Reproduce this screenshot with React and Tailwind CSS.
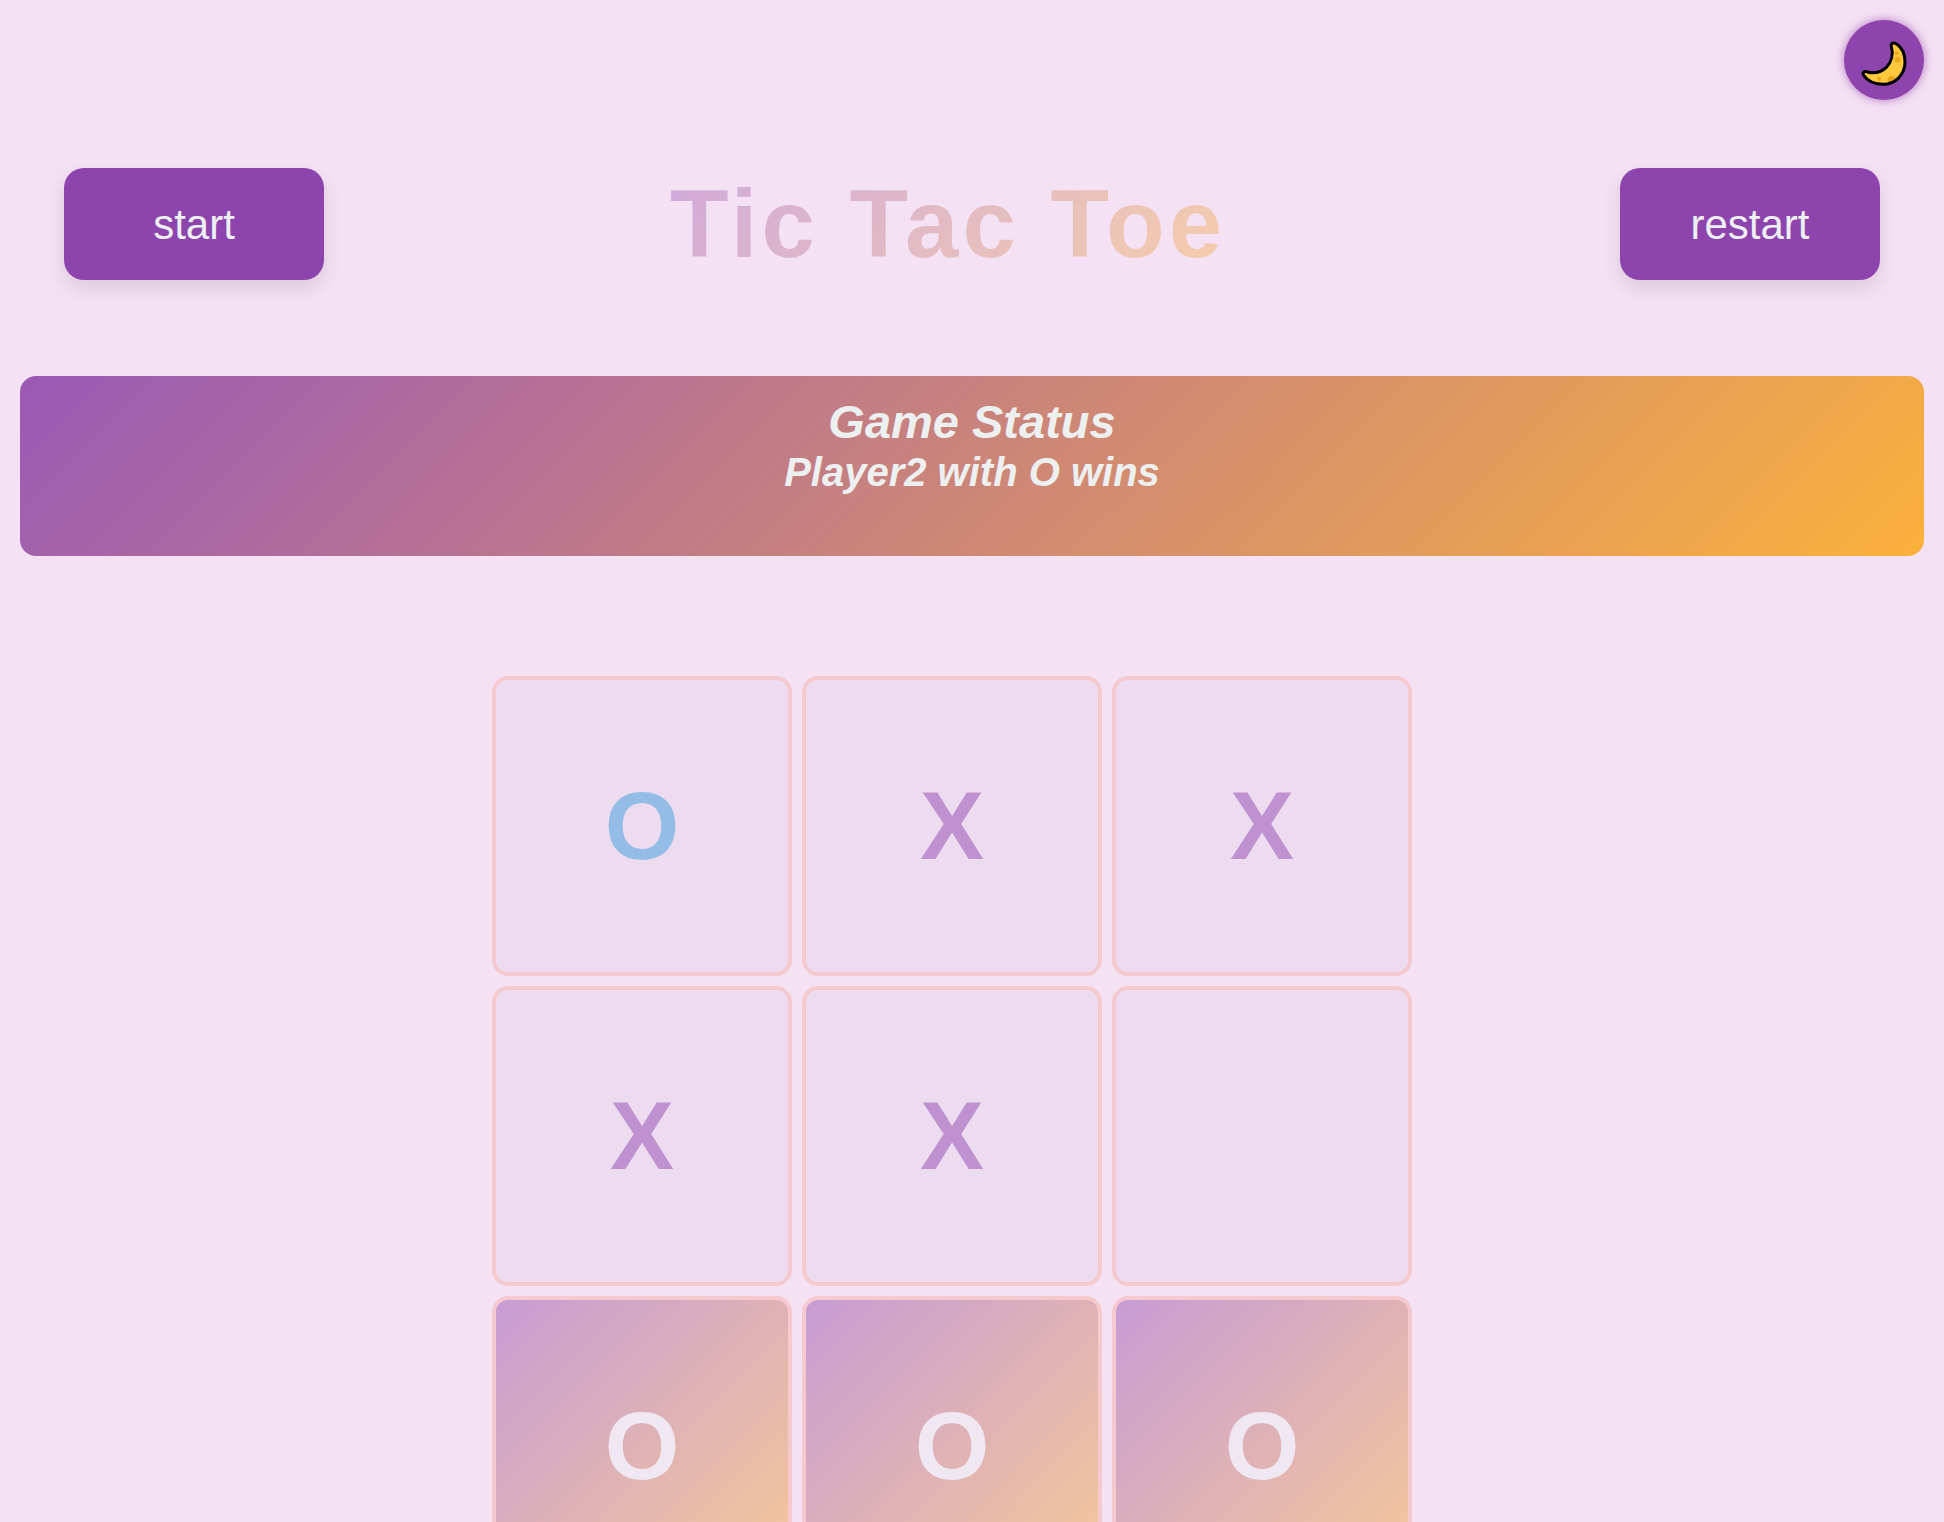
const cells = ["O", "X", "X", "X", "X", "", "O", "O", "O"];
const winning = [6, 7, 8];

const moonPath =
  "M112 50C109 40 120 35 129 43C145 54 153 75 153 97C153 135 122 163 88 163C62 163 40 152 29 136C24 128 31 122 40 126C62 132 82 126 97 112C113 96 119 72 112 50Z";

function MoonIcon() {
  return (
    <svg viewBox="0 0 180 180" className="size-15" aria-hidden="true">
      <clipPath id="moon-clip">
        <path d={moonPath} />
      </clipPath>
      <path d={moonPath} fill="#ffc83d" />
      <g clipPath="url(#moon-clip)" fill="#e9a71c">
        <circle cx="129" cy="70" r="6" />
        <circle cx="131" cy="89" r="8.5" />
        <circle cx="75" cy="146" r="6" />
        <circle cx="113" cy="150" r="12" />
      </g>
      <path d={moonPath} fill="none" stroke="#000" strokeWidth="9" strokeLinejoin="round" />
    </svg>
  );
}

function GameButton({ children }) {
  return (
    <button
      type="button"
      className="h-28 w-65 rounded-[20px] bg-[#8e44ad] text-[42px] text-[#ecf0f1] shadow-[0_8px_20px_rgba(0,0,0,0.1)]"
    >
      {children}
    </button>
  );
}

function Cell({ mark, won, index }) {
  const tone = won
    ? "bg-linear-135/srgb from-[#9b59b6] to-[#fbb13c] text-[#ecf0f1]"
    : mark === "O"
      ? "bg-[#e8d8ec] text-[#3498db]"
      : "bg-[#e8d8ec] text-[#8e44ad]";
  return (
    <button
      type="button"
      aria-label={`Cell ${index + 1} ${mark}`}
      className={`flex aspect-square items-center justify-center rounded-2xl border-4 border-[#f8b3ac] text-[96px] leading-none font-bold opacity-50 ${tone}`}
    >
      {mark}
    </button>
  );
}

export default function App() {
  return (
    <div className="min-h-screen bg-[#f4e1f4] px-5 pb-10 font-['Liberation_Sans',Arial,sans-serif]">
      <button
        type="button"
        aria-label="Toggle theme"
        className="fixed top-5 right-5 flex size-20 items-center justify-center rounded-full bg-[#8e44ad] shadow-[0_0_10px_#8e44adb3]"
      >
        <MoonIcon />
      </button>
      <header className="flex items-center justify-between px-11 pt-42">
        <GameButton>start</GameButton>
        <h1 className="mr-12 bg-linear-135/srgb from-[#9b59b6] to-[#fbb13c] bg-clip-text text-[96px] leading-28 font-bold tracking-[4px] text-transparent opacity-40">
          Tic Tac Toe
        </h1>
        <GameButton>restart</GameButton>
      </header>
      <section className="mt-24 h-45 rounded-2xl bg-linear-135/srgb from-[#9b59b6] to-[#fbb13c] pt-5 text-center font-bold text-[#ecf0f1] italic">
        <h2 className="text-[47px] leading-[52px]">Game Status</h2>
        <p className="text-[40px] leading-12">Player2 with O wins</p>
      </section>
      <main className="mt-30 pr-10">
        <div className="mx-auto grid max-w-230 grid-cols-3 gap-2.5">
          {cells.map((mark, i) => (
            <Cell key={i} index={i} mark={mark} won={winning.includes(i)} />
          ))}
        </div>
      </main>
    </div>
  );
}
